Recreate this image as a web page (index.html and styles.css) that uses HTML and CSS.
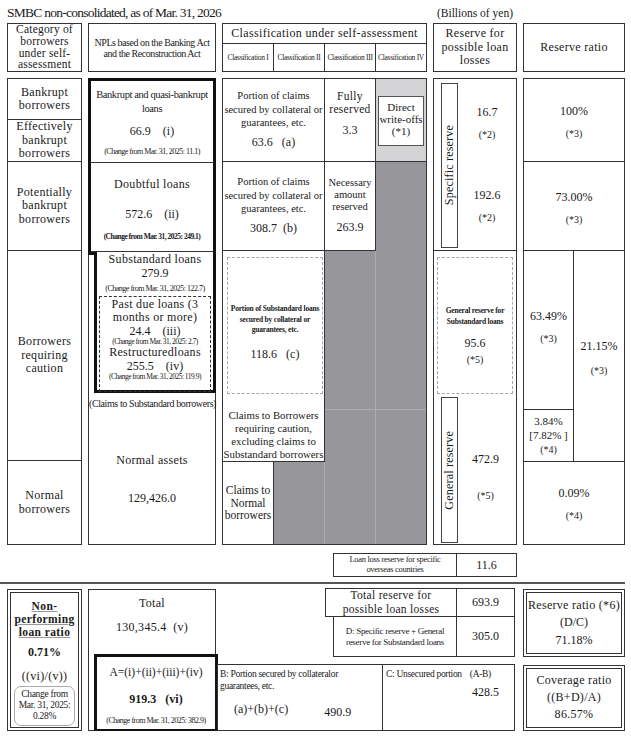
FILE: index.html
```html
<!DOCTYPE html>
<html lang="en">
<head>
    <meta charset="UTF-8">
    <meta name="viewport" content="width=device-width, initial-scale=1.0">
    <title>SMBC non-consolidated - NPLs and reserves</title>
    <link rel="stylesheet" href="styles.css">
</head>
<body>
<div class="sheet">
    <div class="grid-row caption-row">
        <div class="title">SMBC non-consolidated, as of Mar. 31, 2026</div>
        <div class="unit">(Billions of yen)</div>
    </div>

    <!-- Column headers -->
    <div class="grid-row head-row">
        <div class="box head cat-head">Category of borrowers under self-assessment</div>
        <div class="box head npl-head">NPLs based on the Banking Act<br>and the Reconstruction Act</div>
        <div class="box class-head">
            <div class="class-title">Classification under self-assessment</div>
            <div class="class-subs">
                <span>Classification I</span>
                <span>Classification II</span>
                <span>Classification III</span>
                <span>Classification IV</span>
            </div>
        </div>
        <div class="box head wide">Reserve for possible loan losses</div>
        <div class="box head wide">Reserve ratio</div>
    </div>

    <!-- Main body -->
    <div class="grid-row body-row">
        <div class="box cat-col wide">
            <div class="cell">Bankrupt borrowers</div>
            <div class="cell">Effectively bankrupt borrowers</div>
            <div class="cell">Potentially bankrupt borrowers</div>
            <div class="cell">Borrowers requiring caution</div>
            <div class="cell last">Normal borrowers</div>
        </div>

        <div class="box npl-col">
            <div class="bold-top">
                <div class="npl-seg seg-bankrupt">
                    <div class="cond">Bankrupt and quasi-bankrupt<br>loans</div>
                    <div class="amount">66.9 &nbsp;&nbsp; (i)</div>
                    <div class="change">(Change from Mar. 31, 2025: 11.1)</div>
                </div>
                <div class="npl-seg seg-doubtful">
                    <div class="wide">Doubtful loans</div>
                    <div class="amount">572.6 &nbsp;&nbsp; (ii)</div>
                    <div class="change strong">(Change from Mar. 31, 2025: 249.1)</div>
                </div>
            </div>
            <div class="bold-sub">
                <div class="wide">Substandard loans</div>
                <div class="amount">279.9</div>
                <div class="change">(Change from Mar. 31, 2025: 122.7)</div>
                <div class="dash-box">
                    <div class="wide">Past due loans (3<br>months or more)</div>
                    <div class="amount">24.4 &nbsp;&nbsp; (iii)</div>
                    <div class="change">(Change from Mar. 31, 2025: 2.7)</div>
                    <div class="wide">Restructuredloans</div>
                    <div class="amount">255.5 &nbsp;&nbsp; (iv)</div>
                    <div class="change">(Change from Mar. 31, 2025: 119.9)</div>
                </div>
            </div>
            <div class="sub-note cond">(Claims to Substandard borrowers)</div>
            <div class="normal-assets">
                <div class="wide">Normal assets</div>
                <div class="amount">129,426.0</div>
            </div>
        </div>

        <div class="box class-col">
            <div class="cc c-a">
                <div>Portion of claims<br>secured by collateral or<br>guarantees, etc.</div>
                <div class="amount">63.6 &nbsp; (a)</div>
            </div>
            <div class="cc c-full">
                <div class="wide">Fully<br>reserved</div>
                <div class="amount">3.3</div>
            </div>
            <div class="cc c-wo">
                <div class="wo-box">Direct<br>write-offs<br>(*1)</div>
            </div>
            <div class="cc c-b">
                <div>Portion of claims<br>secured by collateral or<br>guarantees, etc.</div>
                <div class="amount">308.7 &nbsp;(b)</div>
            </div>
            <div class="cc c-need">
                <div>Necessary<br>amount<br>reserved</div>
                <div class="amount">263.9</div>
            </div>
            <div class="cc grey g-r2c4"></div>
            <div class="cc c-sub">
                <div class="dash-box light">
                    <div class="tiny">Portion of Substandard loans<br>secured by collateral or<br>guarantees, etc.</div>
                    <div class="amount">118.6 &nbsp; (c)</div>
                </div>
                <div class="caution-rest">Claims to Borrowers<br>requiring caution,<br>excluding claims to<br>Substandard borrowers</div>
            </div>
            <div class="cc grey g-r3c3"></div>
            <div class="cc grey g-r3c4"></div>
            <div class="cc grey g-r4c3"></div>
            <div class="cc grey g-r4c4"></div>
            <div class="cc c-norm">Claims to<br>Normal<br>borrowers</div>
            <div class="cc grey g-r5c2"></div>
            <div class="cc grey g-r5c3"></div>
            <div class="cc grey g-r5c4"></div>
        </div>

        <div class="box res-col">
            <div class="res-seg res-specific">
                <div class="side-label"><span>Specific reserve</span></div>
                <div class="res-values">
                    <div class="res-val v-top"><div>16.7</div><div class="note">(*2)</div></div>
                    <div class="res-val v-mid"><div>192.6</div><div class="note">(*2)</div></div>
                </div>
            </div>
            <div class="res-seg res-general">
                <div class="dash-box light gen-sub">
                    <div class="tiny">General reserve for<br>Substandard loans</div>
                    <div class="amount">95.6</div>
                    <div class="note">(*5)</div>
                </div>
                <div class="gen-row">
                    <div class="side-label"><span>General reserve</span></div>
                    <div class="res-val v-gen"><div>472.9</div><div class="note">(*5)</div></div>
                </div>
            </div>
        </div>

        <div class="box ratio-col">
            <div class="rc r-1"><div>100%</div><div class="note">(*3)</div></div>
            <div class="rc r-2"><div>73.00%</div><div class="note">(*3)</div></div>
            <div class="rc r-3"><div>63.49%</div><div class="note">(*3)</div></div>
            <div class="rc r-4"><div>3.84%</div><div>[7.82% ]</div><div class="note">(*4)</div></div>
            <div class="rc r-side"><div>21.15%</div><div class="note">(*3)</div></div>
            <div class="rc r-5"><div>0.09%</div><div class="note">(*4)</div></div>
        </div>
    </div>

    <div class="grid-row overseas-row">
        <div class="overseas">
            <div class="ov-label">Loan loss reserve for specific<br>overseas countries</div>
            <div class="ov-value">11.6</div>
        </div>
    </div>

    <div class="separator"></div>

    <!-- Totals -->
    <div class="summary">
        <div class="dbl npl-ratio">
            <div class="npl-ratio-title">Non-<br>performing<br>loan ratio</div>
            <div class="npl-ratio-value">0.71%</div>
            <div class="npl-ratio-formula">((vi)/(v))</div>
            <div class="round-note">Change from<br>Mar. 31, 2025:<br>0.28%</div>
        </div>

        <div class="total-box">
            <div class="wide">Total</div>
            <div class="total-value">130,345.4 &nbsp;(v)</div>
            <div class="a-box">
                <div>A=(i)+(ii)+(iii)+(iv)</div>
                <div class="a-value">919.3 &nbsp; (vi)</div>
                <div class="change">(Change from Mar. 31, 2025: 382.9)</div>
            </div>
        </div>

        <div class="reserve-total">
            <div class="rt-row rt-main">
                <div class="rt-label wide">Total reserve for<br>possible loan losses</div>
                <div class="rt-value">693.9</div>
            </div>
            <div class="rt-row rt-d">
                <div class="rt-label small">D: Specific reserve + General<br>reserve for Substandard loans</div>
                <div class="rt-value">305.0</div>
            </div>
        </div>

        <div class="bc-row">
            <div class="b-box">
                <div class="small">B: Portion secured by collateralor<br>guarantees, etc.</div>
                <div class="b-line"><span>(a)+(b)+(c)</span><span>490.9</span></div>
            </div>
            <div class="c-box">
                <div class="small c-head"><span>C: Unsecured portion</span><span>(A-B)</span></div>
                <div class="c-value">428.5</div>
            </div>
        </div>

        <div class="dbl ratio-box rr-box">
            <div class="wide">Reserve ratio (*6)</div>
            <div>(D/C)</div>
            <div>71.18%</div>
        </div>

        <div class="dbl ratio-box cov-box">
            <div class="wide">Coverage ratio</div>
            <div class="wide">((B+D)/A)</div>
            <div class="wide">86.57%</div>
        </div>
    </div>
</div>
</body>
</html>
```

FILE: styles.css
```css
/* Base */
* {
    box-sizing: border-box;
}
body {
    margin: 0;
    background: #fff;
    color: #1a1a1a;
    font-family: 'Liberation Serif', 'Times New Roman', serif;
    font-size: 11px;
    line-height: 1.2;
}

.sheet {
    width: 631px;
    padding-left: 7px;
}

/* Shared column grid */
.grid-row {
    display: grid;
    grid-template-columns: 75px 128px 205px 84px 102px;
    column-gap: 6px;
}

.box {
    border: 1px solid #333;
}
.wide {
    letter-spacing: 0.3px;
}
.cond {
    letter-spacing: -0.4px;
}
.small {
    font-size: 9.5px;
    letter-spacing: -0.3px;
}
.tiny {
    font-size: 7.5px;
    font-weight: bold;
    letter-spacing: -0.2px;
    line-height: 1.4;
}
.amount {
    font-size: 12px;
}
.note {
    font-size: 10px;
}
.change {
    font-size: 8px;
    letter-spacing: -0.5px;
    white-space: nowrap;
}
.change.strong {
    font-weight: bold;
    font-size: 7.5px;
}

/* Caption */
.caption-row {
    height: 23px;
    grid-template-rows: 23px;
    align-items: center;
}
.title {
    grid-column: 1 / 4;
    font-size: 13.5px;
    letter-spacing: -0.75px;
    padding-top: 3px;
}
.unit {
    grid-column: 4;
    text-align: center;
    font-size: 11.5px;
    padding-top: 4px;
}

/* Headers */
.head-row {
    height: 49px;
    grid-template-rows: 49px;
}
.head {
    display: flex;
    align-items: center;
    justify-content: center;
    text-align: center;
    font-size: 12px;
    line-height: 1.15;
    padding: 0 4px;
}
.cat-head {
    font-size: 11.5px;
    letter-spacing: 0.2px;
    line-height: 11.6px;
    padding: 0 2px;
}
.npl-head {
    font-size: 10px;
    letter-spacing: -0.45px;
    align-items: flex-start;
    padding-top: 13px;
    line-height: 1.1;
}
.class-head {
    display: flex;
    flex-direction: column;
}
.class-title {
    flex: 1;
    display: flex;
    align-items: center;
    justify-content: center;
    font-size: 12px;
    letter-spacing: 0.35px;
    border-bottom: 1px solid #333;
}
.class-subs {
    height: 27px;
    display: grid;
    grid-template-columns: 51px 51px 51px 1fr;
}
.class-subs span {
    display: flex;
    align-items: center;
    justify-content: center;
    font-size: 7.5px;
    letter-spacing: -0.3px;
    border-right: 1px solid #333;
    white-space: nowrap;
    overflow: hidden;
}
.class-subs span:last-child {
    border-right: none;
}

/* Body */
.body-row {
    margin-top: 6px;
    height: 467px;
    grid-template-rows: 467px;
}

/* Category column */
.cat-col {
    display: grid;
    grid-template-rows: 41px 42px 89px 210px 1fr;
    font-size: 12px;
    line-height: 1.12;
}
.cat-col .cell {
    display: flex;
    align-items: center;
    justify-content: center;
    text-align: center;
    border-bottom: 1px solid #333;
    padding: 0 4px;
}
.cat-col .cell.last {
    border-bottom: none;
}

/* NPL column */
.npl-col {
    display: flex;
    flex-direction: column;
    text-align: center;
}
.bold-top {
    position: relative;
    margin: -1px -1px 0 -1px;
    border: 3px solid #111;
    border-bottom: none;
}
.bold-top::after {
    content: '';
    position: absolute;
    left: -3px;
    bottom: -3px;
    width: 9px;
    height: 3px;
    background: #111;
}
.npl-seg {
    display: flex;
    flex-direction: column;
    align-items: center;
}
.seg-bankrupt {
    height: 82px;
    padding-top: 7px;
    border-bottom: 1px solid #333;
    font-size: 10.5px;
    line-height: 1.35;
}
.seg-bankrupt .amount {
    margin-top: 7px;
}
.seg-bankrupt .change {
    margin-top: 7px;
}
.seg-doubtful {
    height: 89px;
    padding-top: 14px;
    border-bottom: 1px solid #333;
    font-size: 12px;
}
.seg-doubtful .amount {
    margin-top: 16px;
}
.seg-doubtful .change {
    margin-top: 10px;
}
.bold-sub {
    margin: 0 -1px 0 5px;
    height: 141px;
    border: 3px solid #111;
    border-top: none;
    padding-top: 1px;
    font-size: 12px;
    line-height: 1.15;
}
.bold-sub .change {
    margin-top: 3px;
}
.dash-box {
    border: 1px dashed #333;
}
.bold-sub .dash-box {
    margin: 3px 2px 0 2px;
    height: 96px;
    padding-top: 1px;
    line-height: 1.12;
}
.bold-sub .dash-box .change {
    margin-top: 0;
    font-size: 7.5px;
}
.sub-note {
    font-size: 10px;
    margin-top: 5px;
    white-space: nowrap;
}
.normal-assets {
    font-size: 12px;
    padding-top: 43px;
}
.normal-assets .amount {
    margin-top: 24px;
}

/* Classification column */
.class-col {
    display: grid;
    grid-template-columns: 51px 51px 51px 1fr;
    grid-template-rows: 83px 89px 159px 52px 1fr;
    text-align: center;
}
.cc {
    border-color: #333;
    border-style: solid;
    border-width: 0;
}
.c-a, .c-b {
    grid-column: 1 / 3;
    border-right-width: 1px;
    border-bottom-width: 1px;
    display: flex;
    flex-direction: column;
    justify-content: center;
    font-size: 10.5px;
    line-height: 1.28;
    white-space: nowrap;
}
.c-a .amount, .c-b .amount {
    margin-top: 6px;
}
.c-full {
    grid-column: 3;
    grid-row: 1;
    border-right-width: 1px;
    border-bottom-width: 1px;
    padding-top: 11px;
    font-size: 11.5px;
    line-height: 1.15;
}
.c-full .amount {
    margin-top: 8px;
}
.c-wo {
    grid-column: 4;
    grid-row: 1;
    background: #d4d4d6;
    border-bottom-width: 1px;
    padding: 17px 2px 0 2px;
}
.wo-box {
    background: #fff;
    border: 1px solid #555;
    height: 50px;
    font-size: 11px;
    line-height: 1.1;
    padding-top: 4px;
}
.c-b {
    grid-row: 2;
}
.c-need {
    grid-column: 3;
    grid-row: 2;
    border-right-width: 1px;
    border-bottom-width: 1px;
    display: flex;
    flex-direction: column;
    justify-content: center;
    font-size: 10.5px;
    line-height: 1.15;
}
.c-need .amount {
    margin-top: 8px;
}
.grey {
    background: #97979b;
    border-color: #adadb1;
}
.g-r2c4 { grid-column: 4; grid-row: 2; }
.g-r3c3 { grid-column: 3; grid-row: 3; border-right-width: 1px; border-bottom-width: 1px; }
.g-r3c4 { grid-column: 4; grid-row: 3; border-bottom-width: 1px; }
.g-r4c3 { grid-column: 3; grid-row: 4; border-right-width: 1px; }
.g-r4c4 { grid-column: 4; grid-row: 4; }
.g-r5c2 { grid-column: 2; grid-row: 5; border-right-width: 1px; }
.g-r5c3 { grid-column: 3; grid-row: 5; border-right-width: 1px; }
.g-r5c4 { grid-column: 4; grid-row: 5; }
.c-sub {
    grid-column: 1 / 3;
    grid-row: 3 / 5;
    border-right-width: 1px;
    border-bottom-width: 1px;
    display: flex;
    flex-direction: column;
    padding-top: 6px;
}
.dash-box.light {
    border-color: #a8a8a8;
}
.c-sub .dash-box {
    margin: 0 1px 0 4px;
    height: 137px;
    padding-top: 46px;
}
.c-sub .dash-box .amount {
    margin-top: 11px;
}
.caution-rest {
    margin-top: auto;
    font-size: 10.8px;
    line-height: 1.2;
    white-space: nowrap;
}
.c-norm {
    grid-column: 1;
    grid-row: 5;
    border-right-width: 1px;
    display: flex;
    align-items: center;
    justify-content: center;
    font-size: 11.5px;
    line-height: 1.13;
}

/* Reserve column */
.res-col {
    display: flex;
    flex-direction: column;
    text-align: center;
    font-size: 12px;
}
.res-seg {
    display: flex;
}
.res-specific {
    height: 172px;
    border-bottom: 1px solid #333;
    padding: 4px 0 2px 7px;
}
.side-label {
    width: 17px;
    border: 1px solid #444;
    display: flex;
    align-items: center;
    justify-content: center;
}
.side-label span {
    writing-mode: vertical-rl;
    transform: rotate(180deg);
    font-size: 12px;
    letter-spacing: 0.2px;
    white-space: nowrap;
}
.res-values {
    flex: 1;
    display: flex;
    flex-direction: column;
}
.res-val .note {
    margin-top: 10px;
}
.v-top {
    padding-top: 22px;
    height: 79px;
}
.v-mid {
    padding-top: 26px;
}
.res-general {
    flex: 1;
    flex-direction: column;
    padding: 6px 3px 1px 3px;
}
.gen-sub {
    height: 137px;
    padding-top: 48px;
}
.gen-sub .amount {
    margin-top: 9px;
}
.gen-sub .note {
    margin-top: 4px;
}
.gen-row {
    flex: 1;
    display: flex;
    margin-top: 3px;
    padding-left: 4px;
}
.v-gen {
    flex: 1;
    padding-top: 55px;
}
.v-gen .note {
    margin-top: 24px;
}

/* Ratio column */
.ratio-col {
    display: grid;
    grid-template-columns: 50px 1fr;
    grid-template-rows: 83px 89px 159px 52px 1fr;
    text-align: center;
    font-size: 12px;
}
.rc {
    border: 0 solid #333;
}
.rc .note {
    margin-top: 10px;
}
.r-1 {
    grid-column: 1 / 3;
    border-bottom-width: 1px;
    padding-top: 25px;
}
.r-2 {
    grid-column: 1 / 3;
    border-bottom-width: 1px;
    padding-top: 28px;
}
.r-3 {
    grid-column: 1;
    grid-row: 3;
    border-right-width: 1px;
    border-bottom-width: 1px;
    padding-top: 58px;
}
.r-4 {
    grid-column: 1;
    grid-row: 4;
    border-right-width: 1px;
    border-bottom-width: 1px;
    padding-top: 4px;
    font-size: 11px;
    line-height: 1.3;
}
.r-4 .note {
    margin-top: 0;
}
.r-side {
    grid-column: 2;
    grid-row: 3 / 5;
    border-bottom-width: 1px;
    padding-top: 88px;
}
.r-side .note {
    margin-top: 12px;
}
.r-5 {
    grid-column: 1 / 3;
    grid-row: 5;
    padding-top: 24px;
}

/* Overseas reserve */
.overseas-row {
    margin-top: 8px;
}
.overseas {
    grid-column: 3 / 5;
    justify-self: end;
    width: 184px;
    height: 24px;
    display: flex;
    border: 1px solid #333;
}
.ov-label {
    width: 123px;
    border-right: 1px solid #333;
    font-size: 8.5px;
    letter-spacing: -0.3px;
    text-align: center;
    line-height: 1.15;
    padding-top: 1px;
}
.ov-value {
    flex: 1;
    text-align: center;
    font-size: 12px;
    padding-top: 4px;
}

.separator {
    margin: 5px 0 0 -7px;
    width: 625px;
    height: 2px;
    background: #555;
}

/* Totals */
.summary {
    margin-top: 4px;
    display: grid;
    grid-template-columns: 75px 128px 295px 102px;
    grid-template-rows: 69px 67px;
    column-gap: 6px;
    row-gap: 7px;
    text-align: center;
}
.dbl {
    border: 4px double #333;
}
.npl-ratio {
    grid-column: 1;
    grid-row: 1 / 3;
    margin-top: 1px;
    padding: 7px 3px 0 3px;
    display: flex;
    flex-direction: column;
    align-items: center;
}
.npl-ratio-title {
    font-weight: bold;
    font-size: 11.5px;
    line-height: 1.12;
    letter-spacing: 0.4px;
    text-decoration: underline;
    text-decoration-color: #999;
}
.npl-ratio-value {
    font-weight: bold;
    font-size: 12px;
    margin-top: 6px;
}
.npl-ratio-formula {
    font-size: 12px;
    margin-top: 10px;
    letter-spacing: 0.3px;
}
.round-note {
    width: 100%;
    margin-top: 3px;
    border: 1px solid #aaa;
    border-radius: 7px;
    font-size: 9.5px;
    line-height: 1.15;
    letter-spacing: -0.3px;
    padding: 2px 0 3px 0;
}
.total-box {
    grid-column: 2;
    grid-row: 1 / 3;
    border: 1px solid #333;
    margin-top: 1px;
    padding-top: 6px;
    display: flex;
    flex-direction: column;
    font-size: 12px;
}
.total-value {
    margin-top: 10px;
    letter-spacing: 0.3px;
}
.a-box {
    margin: auto -3px -2px 5px;
    height: 78px;
    border: 3px solid #111;
    padding-top: 9px;
    font-size: 11.5px;
}
.a-value {
    font-weight: bold;
    font-size: 12px;
    margin-top: 12px;
}
.a-box .change {
    margin-top: 10px;
}
.reserve-total {
    grid-column: 3;
    grid-row: 1;
    justify-self: end;
    width: 190px;
    margin-right: 2px;
    display: flex;
    flex-direction: column;
}
.rt-row {
    display: flex;
    border: 1px solid #333;
}
.rt-main {
    height: 29px;
}
.rt-d {
    flex: 1;
    margin-left: 8px;
    border-top: none;
}
.rt-label {
    border-right: 1px solid #333;
    display: flex;
    align-items: center;
    justify-content: center;
    line-height: 1.15;
}
.rt-main .rt-label {
    width: 131px;
    font-size: 11.5px;
}
.rt-d .rt-label {
    width: 123px;
    font-size: 9px;
}
.rt-value {
    flex: 1;
    display: flex;
    align-items: center;
    justify-content: center;
    font-size: 12px;
}
.bc-row {
    grid-column: 3;
    grid-row: 2;
    display: flex;
    margin-left: -5px;
}
.b-box {
    width: 166px;
    border: 1px solid #333;
    text-align: left;
    padding: 4px 0 0 2px;
}
.b-box .small {
    line-height: 1.25;
}
.b-line {
    display: flex;
    font-size: 12px;
    margin-top: 9px;
    padding-left: 14px;
}
.b-line span:last-child {
    margin-left: 36px;
    margin-top: 3px;
}
.c-box {
    width: 132px;
    border: 1px solid #333;
    border-left: none;
    text-align: left;
    padding: 4px 0 0 3px;
}
.c-head {
    display: flex;
    gap: 8px;
}
.c-value {
    font-size: 12px;
    text-align: right;
    padding-right: 15px;
    margin-top: 5px;
}
.ratio-box {
    grid-column: 4;
    font-size: 12px;
    line-height: 1.15;
    display: flex;
    flex-direction: column;
    justify-content: space-evenly;
    padding: 2px 0;
}
.rr-box {
    grid-row: 1;
    margin-top: 1px;
}
.cov-box {
    grid-row: 2;
    margin-top: 1px;
}
```
